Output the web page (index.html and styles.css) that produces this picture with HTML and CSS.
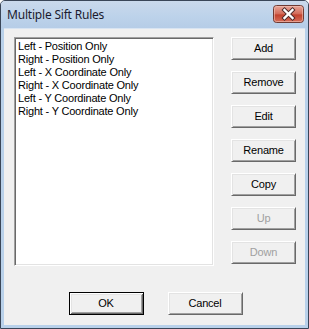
FILE: index.html
```html
<!DOCTYPE html>
<html>
<head>
<meta charset="utf-8">
<link rel="stylesheet" href="styles.css">
</head>
<body>
<div class="window">
  <div class="titlebar">
    <span class="title">Multiple Sift Rules</span>
    <span class="close">
      <svg width="31" height="18" viewBox="0 0 31 18">
        <defs>
          <linearGradient id="cg" x1="0" y1="0" x2="0" y2="1">
            <stop offset="0" stop-color="#e9a99c"/>
            <stop offset="0.5" stop-color="#d26a58"/>
            <stop offset="0.55" stop-color="#c2412d"/>
            <stop offset="1" stop-color="#d7705c"/>
          </linearGradient>
        </defs>
        <rect x="0.5" y="0.5" width="30" height="17" rx="3" ry="3" fill="url(#cg)" stroke="#6e3a33"/>
        <rect x="1.5" y="1.5" width="28" height="15" rx="2" ry="2" fill="none" stroke="#f2c3b8" stroke-opacity="0.6"/>
        <path d="M11.5 5 L19.5 13 M19.5 5 L11.5 13" stroke="#4a2a2a" stroke-width="4.2" stroke-linecap="square"/>
        <path d="M11.5 5 L19.5 13 M19.5 5 L11.5 13" stroke="#ffffff" stroke-width="2.4" stroke-linecap="square"/>
      </svg>
    </span>
  </div>
  <div class="client">
    <div class="main">
      <div class="listbox">
        <div class="item">Left - Position Only</div>
        <div class="item">Right - Position Only</div>
        <div class="item">Left - X Coordinate Only</div>
        <div class="item">Right - X Coordinate Only</div>
        <div class="item">Left - Y Coordinate Only</div>
        <div class="item">Right - Y Coordinate Only</div>
      </div>
      <div class="side">
        <div class="btn">Add</div>
        <div class="btn">Remove</div>
        <div class="btn">Edit</div>
        <div class="btn">Rename</div>
        <div class="btn">Copy</div>
        <div class="btn disabled">Up</div>
        <div class="btn disabled">Down</div>
      </div>
    </div>
    <div class="footer">
      <div class="btn wide default">OK</div>
      <div class="btn wide">Cancel</div>
    </div>
  </div>
</div>
</body>
</html>
```
FILE: styles.css
```css
* { box-sizing: border-box; }
html, body { margin: 0; padding: 0; background: #ffffff; }
.window {
  width: 309px;
  height: 329px;
  border: 1px solid #3a4658;
  border-radius: 5px 5px 0 0;
  background: #b9d1ea;
  display: flex;
  flex-direction: column;
  overflow: hidden;
}
.titlebar {
  height: 27px;
  flex: none;
  background: linear-gradient(#cad9ec, #bcd2ea 60%, #b6cde7);
  display: flex;
  align-items: flex-start;
  justify-content: space-between;
  padding: 0 4px 0 6px;
}
.title {
  font-family: "Noto Sans", "Open Sans", sans-serif;
  font-size: 12px;
  color: #1b1b2e;
  line-height: 14px;
  margin-top: 7px;
  letter-spacing: -0.2px;
}
.close {
  display: block;
  margin-top: 4px;
  height: 18px;
}
.close svg { display: block; }
.client {
  flex: 1;
  margin: 0 3px 3px 3px;
  background: #f0f0f0;
  border-top: 1px solid #d8e4f2;
  padding: 8px 8px 0 10px;
  display: flex;
  flex-direction: column;
  font-family: "Liberation Sans", Arial, sans-serif;
  font-size: 11px;
  letter-spacing: -0.2px;
  color: #000000;
}
.main {
  display: flex;
  gap: 17px;
}
.listbox {
  width: 200px;
  height: 229px;
  background: #ffffff;
  border-top: 1px solid #a0a0a0;
  border-left: 1px solid #a0a0a0;
  border-right: 1px solid #ffffff;
  border-bottom: 1px solid #ffffff;
  box-shadow: inset 1px 1px 0 #696969, inset -1px -1px 0 #e3e3e3;
  padding: 2px 3px;
}
.item {
  height: 13px;
  line-height: 13px;
  white-space: nowrap;
}
.side {
  display: flex;
  flex-direction: column;
  gap: 11px;
}
.btn {
  width: 65px;
  height: 23px;
  background: #f0f0f0;
  border-top: 1px solid #ffffff;
  border-left: 1px solid #ffffff;
  border-right: 1px solid #696969;
  border-bottom: 1px solid #696969;
  box-shadow: inset 1px 1px 0 #e3e3e3, inset -1px -1px 0 #a0a0a0;
  display: flex;
  align-items: center;
  justify-content: center;
  line-height: 13px;
  padding-bottom: 1px;
}
.btn.disabled { color: #a0a0a0; }
.footer {
  display: flex;
  justify-content: center;
  gap: 24px;
  margin-top: 26px;
}
.btn.wide { width: 75px; }
.btn.default {
  border: 1px solid #000000;
  box-shadow: inset 1px 1px 0 #ffffff, inset -1px -1px 0 #696969, inset 2px 2px 0 #e3e3e3, inset -2px -2px 0 #a0a0a0;
}
```
